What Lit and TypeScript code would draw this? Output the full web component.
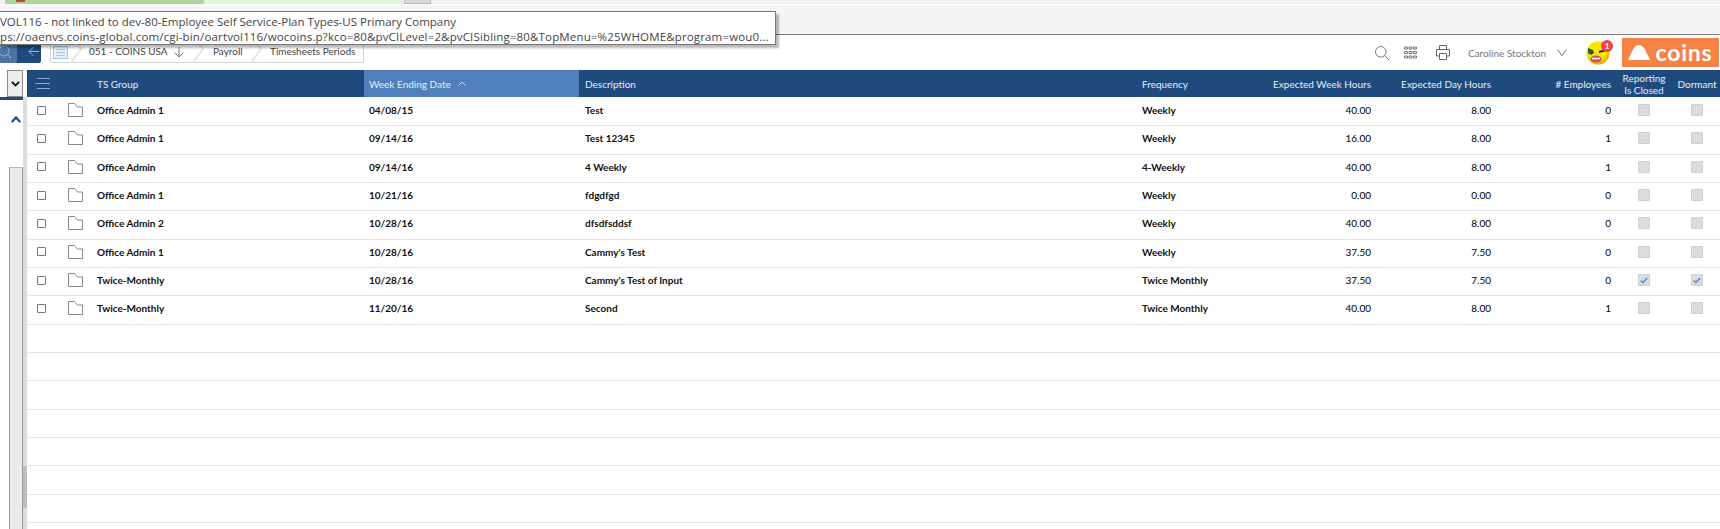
import { LitElement, html, css, svg } from 'lit';
import { customElement } from 'lit/decorators.js';

type Row = [string, string, string, string, string, string, string, boolean?];

const ROWS: Row[] = [
  ['Office Admin 1', '04/08/15', 'Test', 'Weekly', '40.00', '8.00', '0'],
  ['Office Admin 1', '09/14/16', 'Test 12345', 'Weekly', '16.00', '8.00', '1'],
  ['Office Admin', '09/14/16', '4 Weekly', '4-Weekly', '40.00', '8.00', '1'],
  ['Office Admin 1', '10/21/16', 'fdgdfgd', 'Weekly', '0.00', '0.00', '0'],
  ['Office Admin 2', '10/28/16', 'dfsdfsddsf', 'Weekly', '40.00', '8.00', '0'],
  ['Office Admin 1', '10/28/16', "Cammy's Test", 'Weekly', '37.50', '7.50', '0'],
  ['Twice-Monthly', '10/28/16', "Cammy's Test of Input", 'Twice Monthly', '37.50', '7.50', '0', true],
  ['Twice-Monthly', '11/20/16', 'Second', 'Twice Monthly', '40.00', '8.00', '1'],
];

const EMPTY_ROWS = 8;

const folder = svg`<svg width="15" height="14" viewBox="0 0 15 14" fill="none" stroke="#8a8a8a"><path d="M.5 13.500V.5h6l3 3.500h5v9.500z"/></svg>`;
const check = svg`<svg width="8" height="7" viewBox="0 0 8 7" fill="none" stroke="#5b8fd0" stroke-width="1.600"><path d="M.8 3.500l2 2L7.200 1"/></svg>`;

@customElement('app-root')
export class AppRoot extends LitElement {
  static styles = css`
    :host {
      display: block;
      width: 1720px;
      height: 529px;
      overflow: hidden;
      position: relative;
      background: #fff;
      font-family: Lato, 'Liberation Sans', sans-serif;
      font-size: 10px;
      color: #111;
    }

    .browser-tabs {
      height: 4px;
      display: flex;
      background: #f0f0f0;
    }
    .tab-a { width: 199px; margin-left: 5px; background: #aed49a; }
    .tab-a i { display: block; width: 9px; height: 2px; margin-left: 11px; background: #b5493a; }
    .tab-b { width: 200px; background: #e2f5d8; }
    .tab-c { width: 27px; box-sizing: border-box; background: #d8d8d8; border: 1px solid #b8b8b8; border-top: 0; }

    .browser-bar {
      height: 31px;
      box-sizing: border-box;
      background: #f5f5f5;
      border-top: 1px solid #fff;
      border-bottom: 1px solid #7d7d7d;
    }

    .tooltip {
      position: absolute;
      left: -1px;
      top: 11px;
      width: 777px;
      height: 34px;
      box-sizing: border-box;
      padding-top: 2px;
      background: #fff;
      border: 1px solid #767676;
      box-shadow: 3px 3px 2px rgba(0, 0, 0, 0.28);
      font-family: 'Open Sans', 'Noto Sans', sans-serif;
      font-size: 11.5px;
      line-height: 15px;
      color: #444;
      overflow: hidden;
      white-space: nowrap;
      z-index: 5;
    }
    .tooltip .url { letter-spacing: 0.15px; }

    .toolbar {
      height: 35px;
      display: flex;
      align-items: flex-start;
      color: #666;
    }
    .search-box {
      width: 17px;
      height: 28px;
      background: #4c73a5;
      display: flex;
      align-items: flex-end;
      overflow: hidden;
    }
    .search-box svg { margin: 0 0 4px -2px; flex: none; }
    .back-box {
      width: 24px;
      height: 28px;
      background: #1f4a7e;
      border-bottom-right-radius: 2px;
      display: flex;
      align-items: flex-end;
      justify-content: center;
    }
    .back-box svg { margin: 0 0 6px 10px; }
    .crumbs {
      margin-left: 9px;
      height: 28px;
      position: relative;
      width: 315px;
      flex: none;
    }
    .crumb-lines { position: absolute; left: 0; top: 0; }
    .crumb-text {
      position: absolute;
      top: 9px;
      font-size: 10px;
      line-height: 15px;
      color: #444;
      white-space: nowrap;
    }
    .crumb-arrow { position: absolute; left: 124px; top: 12px; }

    .tools {
      margin-left: auto;
      display: flex;
      align-items: center;
      height: 35px;
      padding-right: 1px;
    }
    .tools > svg { display: block; flex: none; }
    .user { font-size: 10px; color: #777; margin-left: 18px; white-space: nowrap; }
    .logo {
      width: 97px;
      height: 29px;
      background: #f58345;
      display: flex;
      align-items: center;
      justify-content: center;
      gap: 5px;
      color: #fff;
      font-size: 23px;
      font-weight: 700;
      line-height: 29px;
      letter-spacing: 0.8px;
    }
    .avatar { position: relative; width: 24px; height: 24px; margin: 0 12px 0 19px; }
    .avatar svg { display: block; }
    .badge {
      position: absolute;
      right: -3px;
      top: -1px;
      width: 12px;
      height: 12px;
      border-radius: 50%;
      background: #f2404a;
      color: #fff;
      font-size: 8px;
      font-weight: 700;
      line-height: 12px;
      text-align: center;
    }

    .main { display: flex; }

    .side {
      width: 27px;
      flex: none;
      height: 459px;
      display: flex;
      position: relative;
    }
    .side-panel { width: 23px; flex: none; position: relative; }
    .select {
      height: 27px;
      display: flex;
      justify-content: flex-end;
      border-bottom: 3px solid #1f4a7e;
    }
    .select-btn {
      width: 16px;
      height: 27px;
      box-sizing: border-box;
      background: #ededed;
      border: 1px solid #8a8a8a;
      display: flex;
      align-items: center;
      justify-content: center;
    }
    .chevron { margin: 16px 0 0 11px; display: block; }
    .track-outer {
      position: absolute;
      left: 9px;
      top: 97px;
      width: 14px;
      bottom: 0;
      box-sizing: border-box;
      background: #ebebeb;
      border-left: 1px solid #999;
      border-right: 1px solid #999;
      border-top: 1px solid #bbb;
    }
    .scroll {
      width: 4px;
      flex: none;
      margin-top: 27px;
      background: #dedede;
      position: relative;
    }
    .thumb {
      position: absolute;
      left: 0;
      top: 369px;
      width: 4px;
      height: 42px;
      background: #bdbdbd;
    }

    .table { width: 1693px; flex: none; }
    .rows { padding-top: 1px; }

    .row {
      display: grid;
      grid-template-columns: 33px 37px 267px 215px 563px 100px 129px 120px 120px 66px 40px;
      padding-right: 3px;
      align-items: center;
      box-sizing: border-box;
    }

    .head {
      height: 27px;
      background: #1f4a7e;
      color: #e8eef5;
      line-height: 12px;
    }
    .head > div { height: 100%; display: flex; align-items: center; white-space: nowrap; }
    .head .menu { padding-left: 8px; }
    .head .sorted { background: #4f80bb; padding-left: 5px; gap: 7px; }
    .head .desc { padding-left: 6px; }
    .head .num { justify-content: flex-end; }
    .head .ctr { justify-content: center; text-align: center; }

    .body-row {
      height: 28.33px;
      padding-bottom: 3px;
      border-bottom: 1px solid #e4e4e4;
      font-weight: 700;
    }
    .body-row .num { text-align: right; font-weight: 400; color: #000; }
    .body-row .pad { padding-left: 5px; }
    .body-row .desc { padding-left: 6px; }
    .body-row > div { white-space: nowrap; }

    .box {
      display: block;
      box-sizing: border-box;
      width: 9px;
      height: 9px;
      margin-left: 10px;
      border: 1px solid #777;
      background: #fff;
      border-radius: 1px;
    }
    .folder-cell { padding-left: 8px; line-height: 0; }
    .ro-cell { display: flex; justify-content: center; }
    .ro {
      width: 12px;
      height: 12px;
      box-sizing: border-box;
      background: #dcdcdc;
      border: 1px solid #cfcfcf;
      border-radius: 1px;
      display: flex;
      align-items: center;
      justify-content: center;
    }
  `;

  private renderRow(r: Row) {
    return html`
      <div class="row body-row">
        <div><span class="box"></span></div>
        <div class="folder-cell">${folder}</div>
        <div>${r[0]}</div>
        <div class="pad">${r[1]}</div>
        <div class="desc">${r[2]}</div>
        <div>${r[3]}</div>
        <div class="num">${r[4]}</div>
        <div class="num">${r[5]}</div>
        <div class="num">${r[6]}</div>
        <div class="ro-cell"><span class="ro">${r[7] ? check : ''}</span></div>
        <div class="ro-cell"><span class="ro">${r[7] ? check : ''}</span></div>
      </div>
    `;
  }

  render() {
    return html`
      <div class="browser-tabs">
        <div class="tab-a"><i></i></div>
        <div class="tab-b"></div>
        <div class="tab-c"></div>
      </div>
      <div class="browser-bar"></div>

      <div class="tooltip">
        <div>VOL116 - not linked to dev-80-Employee Self Service-Plan Types-US Primary Company</div>
        <div class="url">ps://oaenvs.coins-global.com/cgi-bin/oartvol116/wocoins.p?kco=80&amp;pvCILevel=2&amp;pvCISibling=80&amp;TopMenu=%25WHOME&amp;program=wou0...</div>
      </div>

      <div class="toolbar">
        <div class="search-box">
          <svg width="13" height="13" viewBox="0 0 13 13" fill="none" stroke="#9db4d0"><circle cx="6" cy="5" r="5"/><path d="M9.500 8.500L13 12"/></svg>
        </div>
        <div class="back-box">
          <svg width="12" height="11" viewBox="0 0 12 11" fill="none" stroke="#9db4d0"><path d="M11 5.500H1M5.500 1L1 5.500 5.500 10"/></svg>
        </div>
        <div class="crumbs">
          <svg class="crumb-lines" width="315" height="28" viewBox="0 0 315 28" fill="none">
            <path d="M.5 0v27.500h313V0" stroke="#d4d4d4"/>
            <path d="M21 0l10 14-10 13.500M143 0l10 14-10 13.500M201 0l10 14-10 13.500" stroke="#e4e4e4" stroke-width="2"/>
            <rect x="3.500" y="11.500" width="14" height="12" fill="#e8f1fb" stroke="#a9c6e6"/>
            <path d="M6 14.500h9M6 17.500h9M6 20.500h9" stroke="#a9c6e6"/>
          </svg>
          <span class="crumb-text" style="left:39px">051 - COINS USA</span>
          <svg class="crumb-arrow" width="10" height="11" viewBox="0 0 10 11" fill="none" stroke="#777"><path d="M5 0v10M.5 5.500L5 10l4.500-4.500"/></svg>
          <span class="crumb-text" style="left:163px">Payroll</span>
          <span class="crumb-text" style="left:220px">Timesheets Periods</span>
        </div>

        <div class="tools">
          <svg width="14" height="14" viewBox="0 0 14 14" fill="none" stroke="#777"><circle cx="5.800" cy="5.800" r="5.300"/><path d="M9.500 9.500L14 14"/></svg>
          <svg style="margin-left:15px" width="13" height="13" viewBox="0 0 13 13" fill="none" stroke="#777"><path d="M.5 1h3v2h-3zM5 1h3v2H5zM9.500 1h3v2h-3zM.5 5.500h3v2h-3zM5 5.500h3v2H5zM9.500 5.500h3v2h-3zM.5 10h3v2h-3zM5 10h3v2H5zM9.500 10h3v2h-3z"/></svg>
          <svg style="margin-left:19px" width="14" height="15" viewBox="0 0 14 15" fill="none" stroke="#666"><path d="M3.500 4.500V.5h7v4M3.500 11H.5V4.500h13V11h-3M3.500 8.500h7v6h-7z"/></svg>
          <span class="user">Caroline Stockton</span>
          <svg style="margin-left:11px" width="10" height="7" viewBox="0 0 10 7" fill="none" stroke="#777"><path d="M.5.500l4.500 6 4.500-6"/></svg>
          <div class="avatar">
            <svg width="24" height="24" viewBox="0 0 24 24">
              <defs>
                <radialGradient id="face" cx="45%" cy="35%" r="70%">
                  <stop offset="60%" stop-color="#f8e600"/>
                  <stop offset="100%" stop-color="#dd9a00"/>
                </radialGradient>
              </defs>
              <circle cx="12" cy="12" r="11.500" fill="url(#face)"/>
              <path d="M2 7l5 2 1 3-3 2-3-2z" fill="#2d5a2a"/>
              <path d="M13 11l7-2" stroke="#222" stroke-width="2"/>
              <ellipse cx="10" cy="18" rx="5.500" ry="3.500" fill="#d84a68"/>
              <path d="M6 17.500h8" stroke="#fff" stroke-width="1.500"/>
            </svg>
            <span class="badge">1</span>
          </div>
          <div class="logo">
            <svg width="22" height="15" viewBox="0 0 22 15"><path d="M0 15c1-3 2-4 3-6C5 3 8 0 11 0s6 3 8 9c1 2 2 3 3 6z" fill="#fff"/></svg>
            <span>coins</span>
          </div>
        </div>
      </div>

      <div class="main">
        <div class="side">
          <div class="side-panel">
            <div class="select">
              <div class="select-btn">
                <svg width="9" height="6" viewBox="0 0 9 6" fill="none" stroke="#111" stroke-width="1.800"><path d="M.8.800L4.500 4.500 8.200.8"/></svg>
              </div>
            </div>
            <svg class="chevron" width="10" height="7" viewBox="0 0 10 7" fill="none" stroke="#1f4a7e" stroke-width="2.200"><path d="M.8 6L5 1.500 9.200 6"/></svg>
            <div class="track-outer"></div>
          </div>
          <div class="scroll"><div class="thumb"></div></div>
        </div>

        <div class="table">
          <div class="row head">
            <div class="menu">
              <svg width="15" height="11" viewBox="0 0 15 11" stroke="#8fa8c6"><path d="M2 .5h13M0 5.500h15M2 10.500h13"/></svg>
            </div>
            <div></div>
            <div>TS Group</div>
            <div class="sorted">Week Ending Date
              <svg width="8" height="5" viewBox="0 0 8 5" fill="none" stroke="#cfdcec"><path d="M.5 4.500L4 1l3.500 3.500"/></svg>
            </div>
            <div class="desc">Description</div>
            <div>Frequency</div>
            <div class="num">Expected Week Hours</div>
            <div class="num">Expected Day Hours</div>
            <div class="num">#&nbsp;Employees</div>
            <div class="ctr">Reporting<br />Is Closed</div>
            <div class="ctr">Dormant</div>
          </div>
          <div class="rows">
            ${ROWS.map((r) => this.renderRow(r))}
            ${Array.from({ length: EMPTY_ROWS }, () => html`<div class="row body-row"></div>`)}
          </div>
        </div>
      </div>
    `;
  }
}
